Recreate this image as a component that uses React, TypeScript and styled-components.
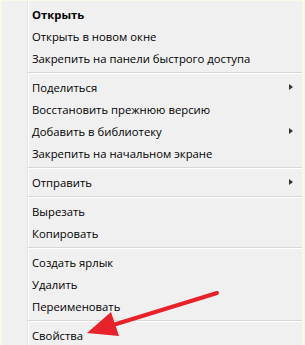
import React from "react";
import styled, { createGlobalStyle } from "styled-components";

const GlobalStyle = createGlobalStyle`
  html, body {
    margin: 0;
    padding: 0;
    background: #fafae4;
  }
`;

const Page = styled.div`
  position: relative;
  width: 305px;
  height: 345px;
  overflow: hidden;
  padding: 1px 3px 0 2px;
  box-sizing: border-box;
`;

const Menu = styled.ul`
  list-style: none;
  margin: 0;
  padding: 2px 0 0 0;
  height: 100%;
  box-sizing: border-box;
  background: linear-gradient(
      to right,
      transparent 25px,
      #e2e3e3 25px,
      #e2e3e3 26px,
      #ffffff 26px,
      #ffffff 27px,
      transparent 27px
    ),
    #f0f0f0;
  font-family: "Open Sans", "Noto Sans", sans-serif;
  font-size: 11.3px;
  color: #000;
`;

const Item = styled.li<{ $bold?: boolean }>`
  display: flex;
  align-items: center;
  justify-content: space-between;
  height: 22px;
  padding: 0 9px 0 30px;
  font-weight: ${({ $bold }) => ($bold ? 700 : 400)};
  white-space: nowrap;
`;

const SubArrow = styled.span`
  width: 0;
  height: 0;
  border-top: 3.5px solid transparent;
  border-bottom: 3.5px solid transparent;
  border-left: 4px solid #333;
`;

const Separator = styled.li`
  height: 7px;
  margin-left: 26px;
  display: flex;
  flex-direction: column;
  justify-content: center;

  &::before {
    content: "";
    display: block;
    height: 1px;
    background: #d7d7d7;
  }
  &::after {
    content: "";
    display: block;
    height: 1px;
    background: #ffffff;
  }
`;

const Pointer = styled.svg`
  position: absolute;
  left: 0;
  top: 0;
  pointer-events: none;
`;

type Entry = { label: string; bold?: boolean; sub?: boolean } | "sep";

const entries: Entry[] = [
  { label: "Открыть", bold: true },
  { label: "Открыть в новом окне" },
  { label: "Закрепить на панели быстрого доступа" },
  "sep",
  { label: "Поделиться", sub: true },
  { label: "Восстановить прежнюю версию" },
  { label: "Добавить в библиотеку", sub: true },
  { label: "Закрепить на начальном экране" },
  "sep",
  { label: "Отправить", sub: true },
  "sep",
  { label: "Вырезать" },
  { label: "Копировать" },
  "sep",
  { label: "Создать ярлык" },
  { label: "Удалить" },
  { label: "Переименовать" },
  "sep",
  { label: "Свойства" },
];

const App = () => {
  return (
    <>
      <GlobalStyle />
      <Page>
        <Menu>
          {entries.map((e, i) =>
            e === "sep" ? (
              <Separator key={i} />
            ) : (
              <Item key={i} $bold={e.bold}>
                <span>{e.label}</span>
                {e.sub && <SubArrow />}
              </Item>
            )
          )}
        </Menu>
        <Pointer width="305" height="345" viewBox="0 0 305 345">
          <line
            x1="217"
            y1="293"
            x2="113"
            y2="325"
            stroke="#e8222b"
            strokeWidth="4"
            strokeLinecap="round"
          />
          <polygon points="87,333 111,312 119,336" fill="#e8222b" />
        </Pointer>
      </Page>
    </>
  );
};

export default App;
